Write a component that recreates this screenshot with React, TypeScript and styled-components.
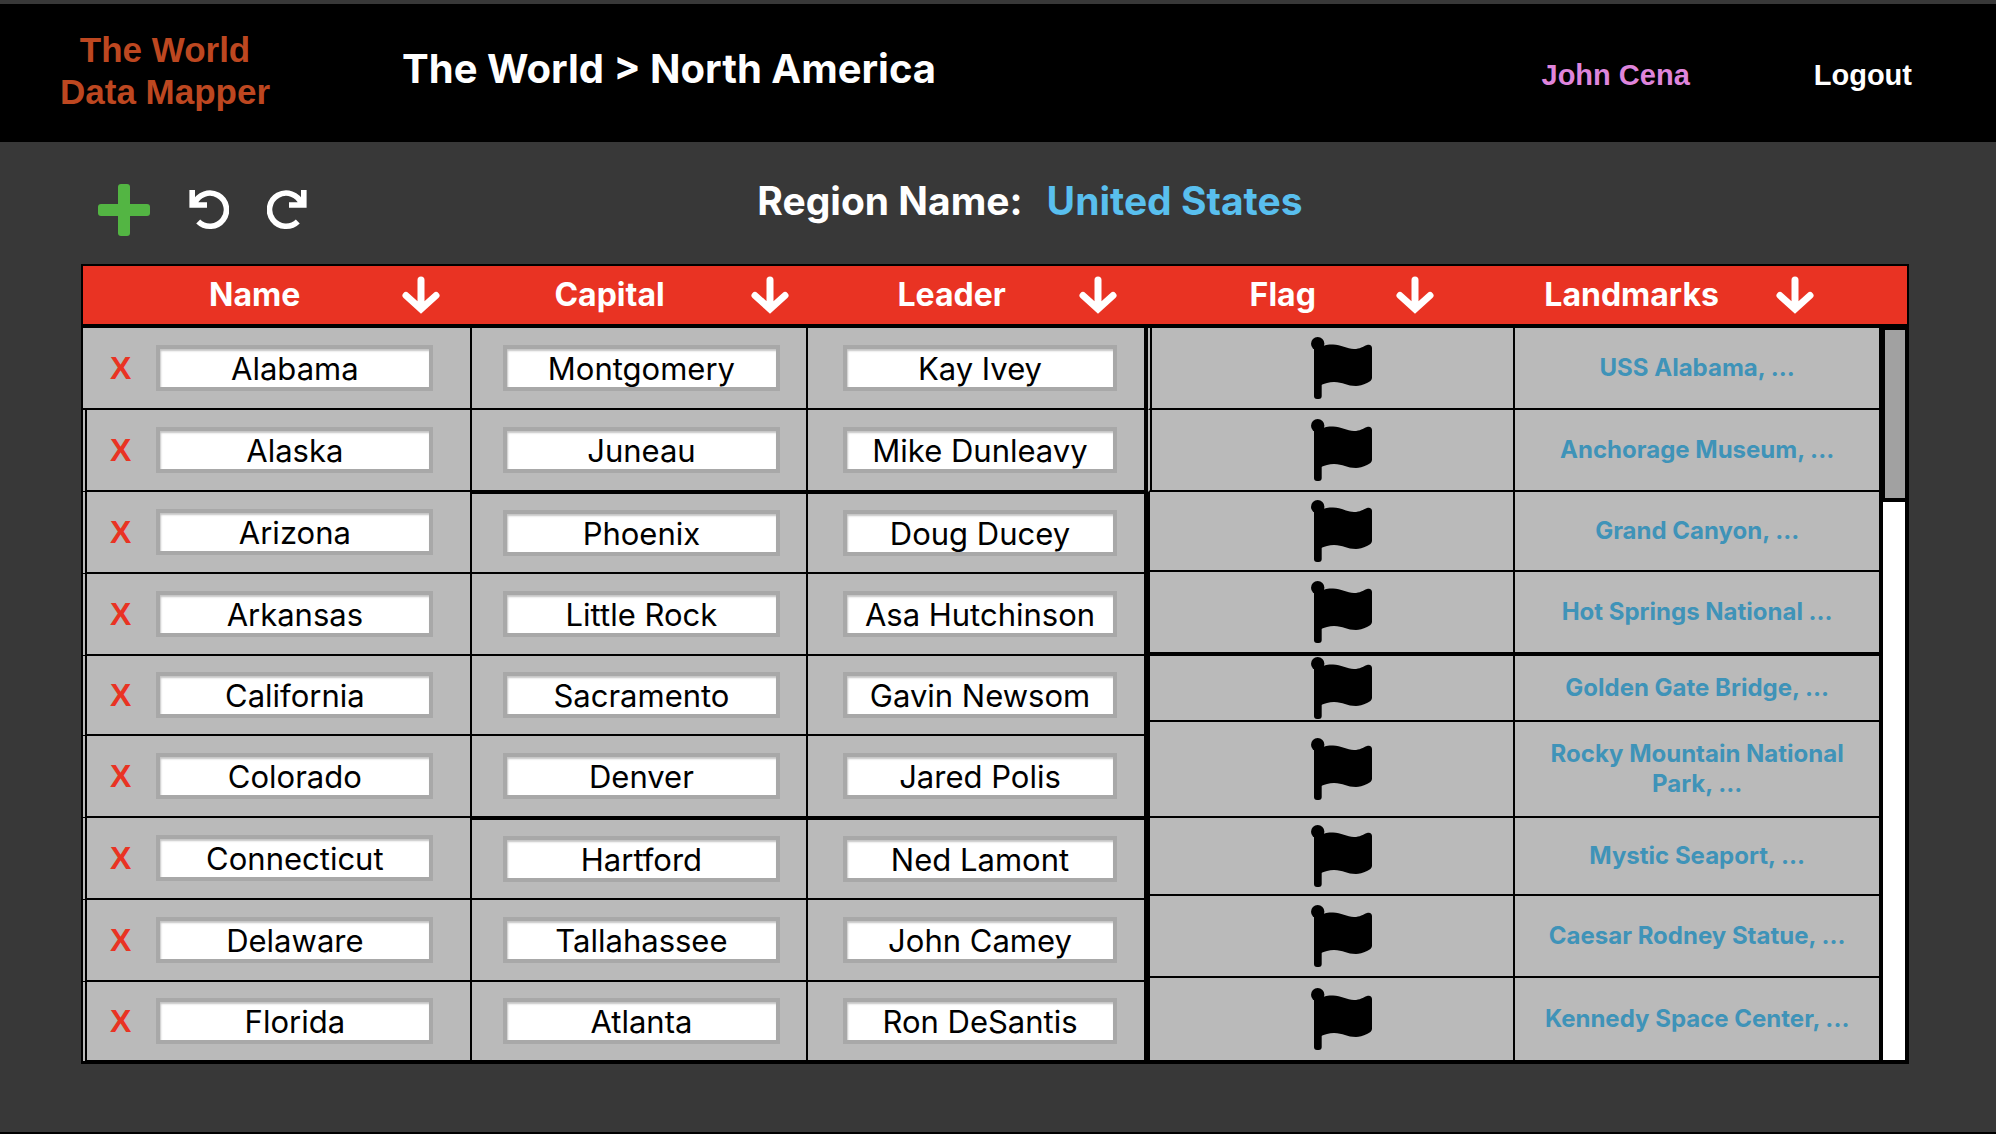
import React from "react";
import styled, { createGlobalStyle, css } from "styled-components";

const INTER = `Inter, "Noto Sans", sans-serif`;
const ARIAL = `"Liberation Sans", Arial, sans-serif`;

const GlobalStyle = createGlobalStyle`
  *, *::before, *::after { box-sizing: border-box; }
  body { margin: 0; background: #383838; }
  button, input { font: inherit; }
`;

const Page = styled.div`
  min-height: 100vh;
  border-top: 4px solid #383838;
  border-bottom: 2px solid #000;
  background: #383838;
  font-family: ${INTER};
`;

const Header = styled.header`
  display: flex;
  align-items: center;
  min-height: 138px;
  padding: 0 84px 4px 60px;
  background: #000;
`;

const Brand = styled.a`
  color: #bd4720;
  font: bold 35px/42px ${ARIAL};
  text-align: center;
  text-decoration: none;
`;

const Breadcrumb = styled.nav`
  flex: 1;
  margin-left: 132px;
  padding-bottom: 4px;
  color: #fff;
  font-size: 40px;
  font-weight: 700;
  line-height: 52px;
`;

const Crumb = styled.a`
  color: inherit;
  text-decoration: none;
`;

const Account = styled.div`
  display: flex;
  align-items: center;
  gap: 124px;
  padding-top: 8px;
  font: bold 29px/36px ${ARIAL};
`;

const UserLink = styled.a`
  color: #df85dc;
  text-decoration: none;
`;

const Logout = styled.button`
  padding: 0;
  border: 0;
  background: none;
  color: #fff;
`;

const Main = styled.main`
  padding: 0 87px 68px 81px;
`;

const Toolbar = styled.div`
  display: flex;
  align-items: center;
  min-height: 122px;
`;

const Tools = styled.div`
  display: flex;
  align-items: center;
  width: 37%;
  padding: 14px 0 0 16px;
  gap: 38px;
`;

const IconButton = styled.button`
  display: flex;
  padding: 0;
  border: 0;
  background: none;
  color: #fff;
`;

const RegionTitle = styled.h1`
  display: flex;
  gap: 24px;
  margin: 0;
  padding-bottom: 4px;
  color: #fff;
  font-size: 39px;
  font-weight: 700;
  line-height: 48px;
`;

const RegionLink = styled.a`
  color: #59bfee;
  text-decoration: none;
`;

const Sheet = styled.section`
  display: flex;
  border-top: 2px solid #000;
  border-bottom: 2px solid #000;
`;

const Table = styled.table<{ $grow: number }>`
  flex: ${(p) => p.$grow} 1 0;
  width: 0;
  table-layout: fixed;
  border-collapse: separate;
  border-spacing: 0;
`;

const HeadCell = styled.th<{ $start: number; $edge?: boolean }>`
  height: 62px;
  padding: 0 0 0 ${(p) => p.$start}px;
  border-bottom: 4px solid #000;
  ${(p) => p.$edge && css`border-left: 2px solid #000;`}
  background: #e93323;
  color: #fff;
  font-size: 32px;
  font-weight: 700;
  line-height: 38px;
`;

const HeadContent = styled.div<{ $gap: number }>`
  display: flex;
  align-items: center;
  gap: ${(p) => p.$gap}px;
`;

const Row = styled.tr<{ $height: number }>`
  height: ${(p) => p.$height}px;
`;

const Cell = styled.td<{ $heavyTop?: boolean; $heavyBottom?: boolean }>`
  padding: 0;
  border-right: 2px solid #000;
  border-bottom: ${(p) => (p.$heavyBottom ? 4 : 2)}px solid #000;
  ${(p) => p.$heavyTop && css`border-top: 2px solid #000;`}
  background: #bababa;
  text-align: center;
`;

const NameCell = styled(Cell)<{ $first: boolean }>`
  border-left: ${(p) => (p.$first ? "2px solid" : "6px double")} #000;
  padding-left: ${(p) => (p.$first ? 4 : 0)}px;
`;

const CapitalCell = styled(Cell)`
  padding-left: 4px;
`;

const LeaderCell = styled(Cell)`
  padding-left: 8px;
  border-right-width: 4px;
`;

const FlagCell = styled(Cell)<{ $split: boolean }>`
  padding-left: 22px;
  border-left: 2px solid ${(p) => (p.$split ? "#bababa" : "#000")};
  box-shadow: ${(p) => (p.$split ? "inset 2px 0 0 #000" : "none")};
`;

const LandmarkCell = styled(Cell)`
  padding: 0 20px;
  border-right-width: 4px;
`;

const NameFields = styled.div`
  display: flex;
  align-items: center;
  padding-left: 23px;
  gap: 25px;
`;

const RemoveButton = styled.button`
  padding: 0;
  border: 0;
  background: none;
  color: #e93323;
  font: bold 32px/40px ${ARIAL};
`;

const Field = styled.input`
  width: 277px;
  max-width: 84%;
  height: 46px;
  padding: 0 6px;
  border: 4px solid #a8a8a8;
  border-radius: 0;
  outline: 0;
  background: #fff;
  box-shadow: inset 1px 2px 2px #c4c4c4;
  color: #000;
  font-size: 31px;
  line-height: 38px;
  text-align: center;
`;

const FlagButton = styled(IconButton)`
  margin: 0 auto;
  color: #000;
`;

const LandmarkLink = styled.a`
  display: block;
  color: #3f93b8;
  font-size: 24px;
  font-weight: 700;
  line-height: 30px;
  text-decoration: none;
`;

const Rail = styled.div`
  display: flex;
  flex-direction: column;
  width: 26px;
`;

const RailHead = styled.div`
  height: 62px;
  border-right: 2px solid #000;
  border-bottom: 4px solid #000;
  background: #e93323;
`;

const RailTrack = styled.div`
  flex: 1;
  border-right: 4px solid #000;
  border-bottom: 2px solid #000;
  background: #fff;
`;

const RailThumb = styled.div`
  height: 174px;
  border: solid #000;
  border-width: 2px 0 4px 2px;
  background: #a1a1a1;
`;

const PlusIcon = () => (
  <svg width="54" height="54" viewBox="0 0 54 54" aria-hidden="true">
    <rect x="21" y="1" width="12" height="52" rx="3" fill="#53b543" />
    <rect x="1" y="21" width="52" height="12" rx="3" fill="#53b543" />
  </svg>
);

const RedoIcon = ({ flip = false }: { flip?: boolean }) => (
  <svg width="40" height="40" viewBox="0 0 40 40" aria-hidden="true">
    <g transform={flip ? "matrix(-1 0 0 1 40 0)" : undefined}>
      <path d="M30.8 31.5A16.6 16.6 0 1 1 34.5 13.5" fill="none" stroke="currentColor" strokeWidth="5.6" />
      <path d="M34 0h5.6v17.8H22v-5.5h8.5L34 9z" fill="currentColor" />
    </g>
  </svg>
);

const ArrowIcon = () => (
  <svg width="38" height="38" viewBox="0 0 38 38" aria-hidden="true">
    <path
      d="M19 4v28M4 19.5l15 13.5 15-13.5"
      fill="none"
      stroke="currentColor"
      strokeWidth="7"
      strokeLinecap="round"
    />
  </svg>
);

const FlagIcon = () => (
  <svg width="62" height="62" viewBox="0 0 62 62" fill="currentColor" aria-hidden="true">
    <circle cx="6.7" cy="6.7" r="6.7" />
    <rect x="3" y="6" width="7.7" height="56" rx="3" />
    <path d="M9 10.5C13 8 17 7.5 22 7.5C30 7.5 36 12 43 12C49 12 52 9.5 56 8C59 7 61 8.5 61 11V41C61 43 58.500 45 56 46C52 48 48 49 45 49C36 49 32 45 23 45C18 45 14 46.500 9 48.500Z" />
  </svg>
);

type Column = { label: string; start: number; gap: number; width: string };

const placeColumns: Column[] = [
  { label: "Name", start: 126, gap: 102, width: "36.7%" },
  { label: "Capital", start: 82, gap: 86, width: "31.5%" },
  { label: "Leader", start: 89, gap: 73, width: "31.8%" },
];

const sightColumns: Column[] = [
  { label: "Flag", start: 102, gap: 80, width: "50%" },
  { label: "Landmarks", start: 29, gap: 57, width: "50%" },
];

const regions = [
  { name: "Alabama", capital: "Montgomery", leader: "Kay Ivey", landmark: "USS Alabama, ...", height: 82, sightHeight: 82 },
  { name: "Alaska", capital: "Juneau", leader: "Mike Dunleavy", landmark: "Anchorage Museum, ...", height: 82, sightHeight: 82 },
  { name: "Arizona", capital: "Phoenix", leader: "Doug Ducey", landmark: "Grand Canyon, ...", height: 82, sightHeight: 80, heavyTop: true },
  { name: "Arkansas", capital: "Little Rock", leader: "Asa Hutchinson", landmark: "Hot Springs National ...", height: 82, sightHeight: 84, heavySight: true },
  { name: "California", capital: "Sacramento", leader: "Gavin Newsom", landmark: "Golden Gate Bridge, ...", height: 80, sightHeight: 66 },
  { name: "Colorado", capital: "Denver", leader: "Jared Polis", landmark: "Rocky Mountain National Park, ...", height: 82, sightHeight: 96 },
  { name: "Connecticut", capital: "Hartford", leader: "Ned Lamont", landmark: "Mystic Seaport, ...", height: 82, sightHeight: 78, heavyTop: true },
  { name: "Delaware", capital: "Tallahassee", leader: "John Camey", landmark: "Caesar Rodney Statue, ...", height: 82, sightHeight: 82 },
  { name: "Florida", capital: "Atlanta", leader: "Ron DeSantis", landmark: "Kennedy Space Center, ...", height: 80, sightHeight: 84 },
];

const TableHead = ({ columns, edge }: { columns: Column[]; edge?: boolean }) => (
  <>
    <colgroup>
      {columns.map((c) => (
        <col key={c.label} width={c.width} />
      ))}
    </colgroup>
    <thead>
      <tr>
        {columns.map((c, i) => (
          <HeadCell key={c.label} $start={c.start} $edge={edge && i === 0} scope="col">
            <HeadContent $gap={c.gap}>
              {c.label}
              <IconButton type="button" aria-label={`Sort by ${c.label}`}>
                <ArrowIcon />
              </IconButton>
            </HeadContent>
          </HeadCell>
        ))}
      </tr>
    </thead>
  </>
);

export default function App() {
  return (
    <Page>
      <GlobalStyle />
      <Header>
        <Brand href="#">
          The World
          <br />
          Data Mapper
        </Brand>
        <Breadcrumb aria-label="Breadcrumb">
          <Crumb href="#world">The World</Crumb> &gt; <Crumb href="#north-america">North America</Crumb>
        </Breadcrumb>
        <Account>
          <UserLink href="#account">John Cena</UserLink>
          <Logout type="button">Logout</Logout>
        </Account>
      </Header>
      <Main>
        <Toolbar>
          <Tools>
            <IconButton type="button" aria-label="Add region">
              <PlusIcon />
            </IconButton>
            <IconButton type="button" aria-label="Undo">
              <RedoIcon flip />
            </IconButton>
            <IconButton type="button" aria-label="Redo">
              <RedoIcon />
            </IconButton>
          </Tools>
          <RegionTitle>
            Region Name: <RegionLink href="#united-states">United States</RegionLink>
          </RegionTitle>
        </Toolbar>
        <Sheet>
          <Table $grow={1066}>
            <TableHead columns={placeColumns} edge />
            <tbody>
              {regions.map((r, i) => (
                <Row key={r.name} $height={r.height}>
                  <NameCell $first={i === 0}>
                    <NameFields>
                      <RemoveButton type="button" aria-label={`Remove ${r.name}`}>
                        X
                      </RemoveButton>
                      <Field aria-label="Name" defaultValue={r.name} />
                    </NameFields>
                  </NameCell>
                  <CapitalCell $heavyTop={r.heavyTop}>
                    <Field aria-label={`Capital of ${r.name}`} defaultValue={r.capital} />
                  </CapitalCell>
                  <LeaderCell $heavyTop={r.heavyTop}>
                    <Field aria-label={`Leader of ${r.name}`} defaultValue={r.leader} />
                  </LeaderCell>
                </Row>
              ))}
            </tbody>
          </Table>
          <Table $grow={735}>
            <TableHead columns={sightColumns} />
            <tbody>
              {regions.map((r, i) => (
                <Row key={r.name} $height={r.sightHeight}>
                  <FlagCell $split={i < 2} $heavyBottom={r.heavySight}>
                    <FlagButton type="button" aria-label={`Flag of ${r.name}`}>
                      <FlagIcon />
                    </FlagButton>
                  </FlagCell>
                  <LandmarkCell $heavyBottom={r.heavySight}>
                    <LandmarkLink href={`#${r.name}`}>{r.landmark}</LandmarkLink>
                  </LandmarkCell>
                </Row>
              ))}
            </tbody>
          </Table>
          <Rail>
            <RailHead />
            <RailTrack>
              <RailThumb />
            </RailTrack>
          </Rail>
        </Sheet>
      </Main>
    </Page>
  );
}
